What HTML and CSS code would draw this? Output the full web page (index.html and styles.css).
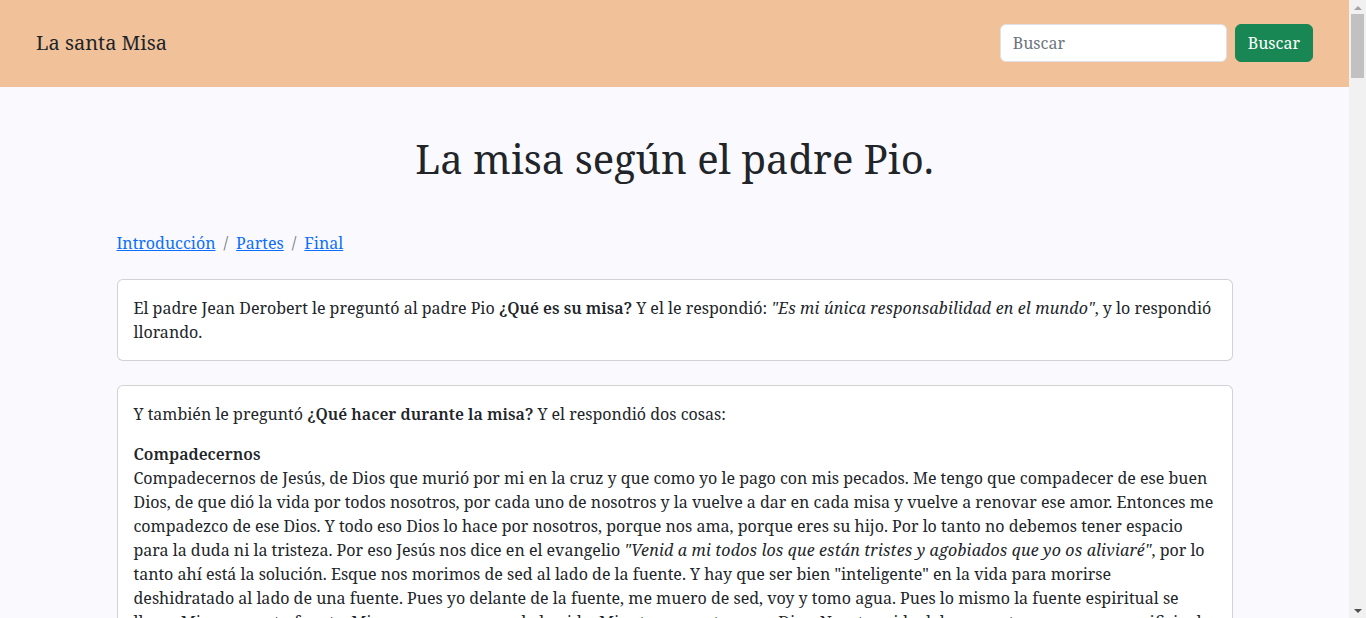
FILE: index.html
```html
<!DOCTYPE html>
<html lang="es">
<head>
<meta charset="utf-8">
<title>La santa Misa</title>
<link rel="stylesheet" href="styles.css">
</head>
<body>
<div class="page">
  <nav class="navbar">
    <a class="brand" href="#">La santa Misa</a>
    <form class="search">
      <input class="search-input" type="search" placeholder="Buscar">
      <button class="btn-search" type="button">Buscar</button>
    </form>
  </nav>
  <main class="container">
    <h1 class="title">La misa según el padre Pio.</h1>
    <ol class="breadcrumb">
      <li><a href="#">Introducción</a></li>
      <li><a href="#">Partes</a></li>
      <li><a href="#">Final</a></li>
    </ol>
    <div class="card">
      <div class="card-body">
        <p>El padre Jean Derobert le preguntó al padre Pio <b>¿Qué es su misa?</b> Y el le respondió: <i>"Es mi única responsabilidad en el mundo"</i>, y lo respondió llorando.</p>
      </div>
    </div>
    <div class="card">
      <div class="card-body">
        <p>Y también le preguntó <b>¿Qué hacer durante la misa?</b> Y el respondió dos cosas:</p>
        <p><b>Compadecernos</b><br>Compadecernos de Jesús, de Dios que murió por mi en la cruz y que como yo le pago con mis pecados. Me tengo que compadecer de ese buen Dios, de que dió la vida por todos nosotros, por cada uno de nosotros y la vuelve a dar en cada misa y vuelve a renovar ese amor. Entonces me compadezco de ese Dios. Y todo eso Dios lo hace por nosotros, porque nos ama, porque eres su hijo. Por lo tanto no debemos tener espacio para la duda ni la tristeza. Por eso Jesús nos dice en el evangelio <i>"Venid a mi todos los que están tristes y agobiados que yo os aliviaré"</i>, por lo tanto ahí está la solución. Esque nos morimos de sed al lado de la fuente. Y hay que ser bien "inteligente" en la vida para morirse deshidratado al lado de una fuente. Pues yo delante de la fuente, me muero de sed, voy y tomo agua. Pues lo mismo la fuente espiritual se llama Misa, esa es tu fuente. Misa es agua que nos da la vida. Misa te encuentras con Dios. Nuestra vida debe encontrarse con ese sacrificio de amor, porque sin la Misa no podemos vivir como hijos de Dios.</p>
        <p><b>Ofrecernos</b><br>Ofrecernos junto con Jesús al Padre, poniendo sobre el altar nuestra vida, nuestros trabajos, nuestras alegrías y nuestros sufrimientos, para que todo sea transformado por su amor.</p>
      </div>
    </div>
    <div class="card">
      <div class="card-body">
        <p>Le preguntaron también <b>¿Cómo asistir a la misa?</b> Y el respondió: <i>"Como asistieron la Virgen y las piadosas mujeres al pie de la cruz"</i>. La misa es el mismo sacrificio del Calvario, renovado sobre el altar cada día, y allí estamos invitados a unirnos a Jesús con todo nuestro corazón.</p>
      </div>
    </div>
  </main>
</div>
<div class="scrollbar" aria-hidden="true">
  <div class="sb-btn sb-up"><svg width="8" height="4" viewBox="0 0 8 4"><polygon points="0,4 8,4 4,0" fill="#a3a3a3"/></svg></div>
  <div class="sb-track"><div class="sb-thumb"></div></div>
  <div class="sb-btn sb-down"><svg width="8" height="4" viewBox="0 0 8 4"><polygon points="0,0 8,0 4,4" fill="#505050"/></svg></div>
</div>
</body>
</html>
```
FILE: styles.css
```css
* { box-sizing: border-box; }
html, body { margin: 0; }
body {
  display: flex;
  align-items: flex-start;
  font-family: "Noto Serif", "DejaVu Serif", "Liberation Serif", serif;
  font-size: 16px;
  line-height: 1.5;
  color: #212529;
  background: #fafafe;
}
b { font-weight: 600; }
i { letter-spacing: 0.17px; }
.page { flex: 1; min-width: 0; }
.scrollbar {
  position: sticky;
  top: 0;
  flex: 0 0 17px;
  width: 17px;
  height: 100vh;
  display: flex;
  flex-direction: column;
  background: #f1f1f1;
}
.sb-btn {
  flex: 0 0 14px;
  display: flex;
  align-items: center;
  justify-content: center;
}
.sb-up { padding-top: 1px; }
.sb-track { flex: 1; padding: 0 2px; }
.sb-thumb { height: 64px; background: #c1c1c1; }
.navbar {
  display: flex;
  align-items: center;
  justify-content: space-between;
  height: 87px;
  padding: 0 36px 1px 36px;
  background: #f1c19a;
}
.brand {
  font-size: 20px;
  line-height: 30px;
  color: #212529;
  text-decoration: none;
}
.search { display: flex; gap: 8px; margin: 0; }
.search-input {
  width: 227px;
  height: 38px;
  padding: 6px 12px;
  font: inherit;
  font-size: 16px;
  color: #212529;
  background: #fff;
  border: 1px solid #dee2e6;
  border-radius: 6px;
}
.search-input::placeholder { color: #6c757d; }
.btn-search {
  height: 38px;
  padding: 6px 12px;
  font: inherit;
  font-size: 16px;
  color: #fff;
  background: #198754;
  border: 1px solid #198754;
  border-radius: 6px;
}
.container {
  display: flow-root;
  max-width: 1140px;
  margin: 0 auto;
  padding: 0 12px;
}
.title {
  margin: 48px 0 48px;
  font-size: 40px;
  font-weight: 400;
  line-height: 1.2;
  text-align: center;
}
.breadcrumb {
  display: flex;
  list-style: none;
  padding: 0;
  margin: 0 0 24px;
}
.breadcrumb li + li::before {
  content: "/";
  color: #6c757d;
  padding: 0 8px;
}
.breadcrumb a { color: #0d6efd; text-decoration: underline; }
.card {
  background: #fff;
  border: 1px solid rgba(0,0,0,.175);
  border-radius: 6px;
  margin-bottom: 24px;
}
.card-body { padding: 16px; }
.card-body p { margin: 0 0 16px; }
.card-body p:last-child { margin-bottom: 0; }
```
